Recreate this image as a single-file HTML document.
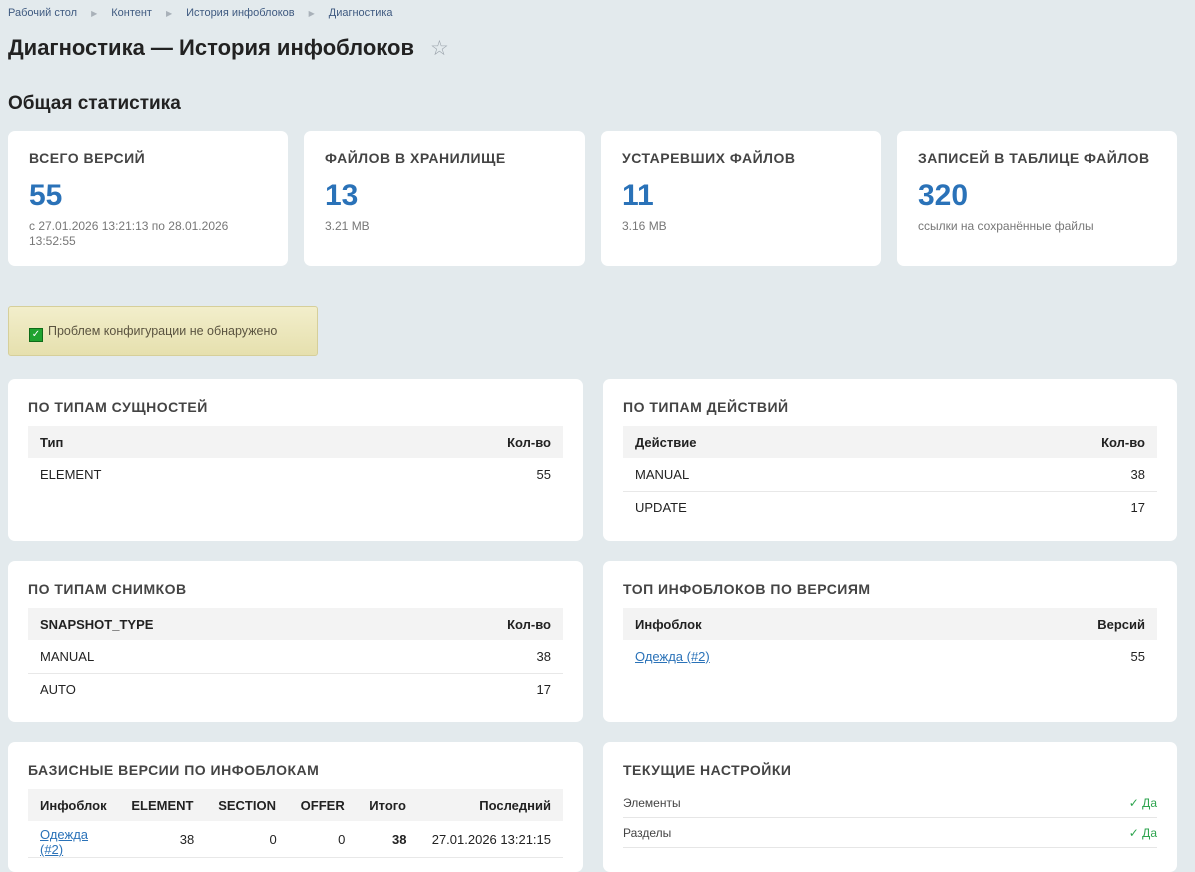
<!DOCTYPE html>
<html><head><meta charset="utf-8"><style>
*{box-sizing:border-box;margin:0;padding:0}
body{width:1195px;height:856px;overflow:hidden;background:#e3eaed;font-family:"Liberation Sans",Arial,sans-serif;color:#333;position:relative}
.a{position:absolute}
.bc{top:7px;left:8px;font-size:11px;color:#3f5a80}
.bc span{margin-right:14px}
.bc i{font-style:normal;color:#a9b1b9;font-size:8px;margin-right:14px}
h1{position:absolute;left:8px;top:35px;font-size:22px;font-weight:bold;color:#222}
.star{position:absolute;left:430px;top:36px;font-size:21px;color:#9aa3ab}
h2{position:absolute;left:8px;top:93px;font-size:19px;font-weight:bold;color:#222}
.card{position:absolute;top:131px;height:135px;background:#fff;border-radius:7px;padding:19px 21px}
.card .t{font-size:14px;font-weight:bold;color:#444;letter-spacing:.5px}
.card .n{font-size:30px;font-weight:bold;color:#2a72b8;margin-top:12px;line-height:36px}
.card .s{font-size:12px;color:#777;margin-top:5px;line-height:15px}
.alert{left:8px;top:306px;width:310px;height:50px;background:linear-gradient(#f2eecb,#e6e0ae);border:1px solid #d6cf9a;border-radius:3px;font-size:12.5px;color:#5b5440;padding:17px 0 0 20px}
.cb{display:inline-block;width:14px;height:14px;background:#1fa22f;border:1px solid #0f6b18;vertical-align:-2px;margin-right:5px;color:#fff;font-size:10px;line-height:12px;text-align:center}
.p{position:absolute;background:#fff;border-radius:7px;padding:20px 20px}
.p .t{font-size:14px;font-weight:bold;color:#444;letter-spacing:.5px;margin:0 0 11px 0}
table{width:100%;border-collapse:collapse;font-size:13px;color:#222}
th{background:#f3f3f3;font-weight:bold;text-align:left;height:32px;padding:0 12px}
td{height:33px;padding:0 12px;border-bottom:1px solid #e8e8e8}
.r{text-align:right}
a{color:#2a72b8;text-decoration:underline}
.set{display:flex;justify-content:space-between;font-size:12px;color:#444;height:30px;align-items:center;border-bottom:1px solid #e6e6e6}
.set b{font-weight:normal;color:#2ea44f}
</style></head><body>
<div class="a bc"><span>Рабочий стол</span><i>▶</i><span>Контент</span><i>▶</i><span>История инфоблоков</span><i>▶</i><span>Диагностика</span></div>
<h1>Диагностика — История инфоблоков</h1>
<div class="star">☆</div>
<h2>Общая статистика</h2>
<div class="card" style="left:8px;width:280px"><div class="t">ВСЕГО ВЕРСИЙ</div><div class="n">55</div><div class="s">с 27.01.2026 13:21:13 по 28.01.2026 13:52:55</div></div>
<div class="card" style="left:304px;width:281px"><div class="t">ФАЙЛОВ В ХРАНИЛИЩЕ</div><div class="n">13</div><div class="s">3.21 MB</div></div>
<div class="card" style="left:601px;width:280px"><div class="t">УСТАРЕВШИХ ФАЙЛОВ</div><div class="n">11</div><div class="s">3.16 MB</div></div>
<div class="card" style="left:897px;width:280px"><div class="t">ЗАПИСЕЙ В ТАБЛИЦЕ ФАЙЛОВ</div><div class="n">320</div><div class="s">ссылки на сохранённые файлы</div></div>
<div class="a alert"><span class="cb">✓</span>Проблем конфигурации не обнаружено</div>

<div class="p" style="left:8px;top:379px;width:575px;height:162px"><div class="t">ПО ТИПАМ СУЩНОСТЕЙ</div>
<table><tr><th>Тип</th><th class="r">Кол-во</th></tr><tr><td style="border:0">ELEMENT</td><td class="r" style="border:0">55</td></tr></table></div>
<div class="p" style="left:603px;top:379px;width:574px;height:162px"><div class="t">ПО ТИПАМ ДЕЙСТВИЙ</div>
<table><tr><th>Действие</th><th class="r">Кол-во</th></tr><tr><td>MANUAL</td><td class="r">38</td></tr><tr><td style="border:0">UPDATE</td><td class="r" style="border:0">17</td></tr></table></div>

<div class="p" style="left:8px;top:561px;width:575px;height:161px"><div class="t">ПО ТИПАМ СНИМКОВ</div>
<table><tr><th>SNAPSHOT_TYPE</th><th class="r">Кол-во</th></tr><tr><td>MANUAL</td><td class="r">38</td></tr><tr><td style="border:0">AUTO</td><td class="r" style="border:0">17</td></tr></table></div>
<div class="p" style="left:603px;top:561px;width:574px;height:161px"><div class="t">ТОП ИНФОБЛОКОВ ПО ВЕРСИЯМ</div>
<table><tr><th>Инфоблок</th><th class="r">Версий</th></tr><tr><td style="border:0"><a>Одежда (#2)</a></td><td class="r" style="border:0">55</td></tr></table></div>

<div class="p" style="left:8px;top:742px;width:575px;height:130px"><div class="t">БАЗИСНЫЕ ВЕРСИИ ПО ИНФОБЛОКАМ</div>
<table><tr><th>Инфоблок</th><th>ELEMENT</th><th>SECTION</th><th>OFFER</th><th>Итого</th><th class="r">Последний</th></tr>
<tr><td style="padding-top:6px;line-height:15px"><a>Одежда<br>(#2)</a></td><td class="r">38</td><td class="r">0</td><td class="r">0</td><td class="r"><b>38</b></td><td class="r">27.01.2026 13:21:15</td></tr></table></div>
<div class="p" style="left:603px;top:742px;width:574px;height:130px"><div class="t" style="margin-bottom:10px">ТЕКУЩИЕ НАСТРОЙКИ</div>
<div class="set"><span>Элементы</span><b>✓ Да</b></div><div class="set"><span>Разделы</span><b>✓ Да</b></div></div>
</body></html>
